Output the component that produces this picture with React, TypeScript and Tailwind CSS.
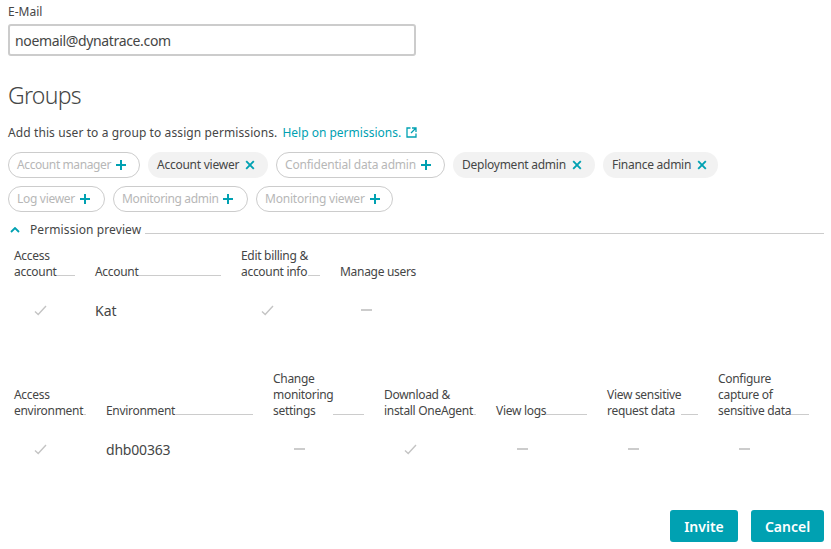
import React from 'react';

const font = { fontFamily: '"Noto Sans", sans-serif' };

const PlusIcon = () => (
  <svg width="12" height="12" viewBox="0 0 12 12" className="ml-[4px] shrink-0">
    <path d="M6 1v10M1 6h10" stroke="#00a1b2" strokeWidth="2" fill="none" />
  </svg>
);

const CloseIcon = () => (
  <svg width="10" height="10" viewBox="0 0 10 10" className="ml-[6px] shrink-0">
    <path d="M1.2 1.2l7.6 7.6M8.8 1.2l-7.6 7.6" stroke="#00a1b2" strokeWidth="1.9" fill="none" />
  </svg>
);

const Check = () => (
  <svg width="13" height="11" viewBox="0 0 13 11">
    <path d="M1 6.5l3.2 3L12 1" stroke="#c4c4c4" strokeWidth="1.4" fill="none" />
  </svg>
);

const Dash = () => <div className="w-[11px] h-[2px] bg-[#cccccc]" />;

const Chip = ({ label, active, width, track }: { label: string; active?: boolean; width: string; track?: string }) =>
  active ? (
    <div className={`${width} h-[26px] pl-[9px] rounded-full bg-[#f2f2f2] text-[#454646] flex items-center`}>
      <span className="tracking-[-0.25px]">{label}</span>
      <CloseIcon />
    </div>
  ) : (
    <div className={`${width} h-[26px] pl-[8px] rounded-full border border-[#cccccc] text-[#b7b7b7] flex items-center`}>
      <span className={track}>{label}</span>
      <PlusIcon />
    </div>
  );

const Header = ({ lines }: { lines: string[] }) => (
  <div className="flex items-end">
    <div className="whitespace-nowrap leading-[16px] tracking-[-0.3px]">
      {lines.map((l, i) => (
        <div key={i}>{l}</div>
      ))}
    </div>
    <div className="flex-1 border-b border-[#cccccc] mb-[4px]" />
  </div>
);

const PermTable = ({ cols, headers, cells }: { cols: string; headers: string[][]; cells: React.ReactNode[] }) => (
  <div className={`grid ${cols} gap-x-[20px] ml-[14px]`}>
    {headers.map((h, i) => (
      <Header key={i} lines={h} />
    ))}
    {cells.map((c, i) => (
      <div key={i} className="h-[60px] flex items-center">
        {c}
      </div>
    ))}
  </div>
);

const Mark = ({ children }: { children: React.ReactNode }) => (
  <div className="w-[52px] flex justify-center">{children}</div>
);

export default function App() {
  return (
    <div className="w-[831px] h-[549px] bg-white overflow-hidden text-[12px] text-[#454646] flex flex-col pt-[4px]" style={font}>
      <div className="pl-[8px] leading-[16px]">E-Mail</div>
      <div className="ml-[8px] mt-[4px] w-[408px] h-[32px] rounded-[3px] border-2 border-[#cccccc] flex items-center pl-[5px] text-[14px] tracking-[-0.35px] text-[#454646]">
        noemail@dynatrace.com
      </div>

      <h2 className="ml-[8px] mt-[22px] text-[23px] leading-[34px] font-light tracking-[-0.7px] text-[#454646]">Groups</h2>

      <div className="ml-[8px] mt-[12px] leading-[18px] flex items-center">
        <span className="tracking-[0.1px]">Add this user to a group to assign permissions.</span>
        <span className="ml-[5px] text-[#00a1b2]">Help on permissions.</span>
        <svg width="11" height="11" viewBox="0 0 11 11" className="ml-[5px] -mt-[2px]">
          <path d="M4.5 1H1v9h9V6.5" stroke="#00a1b2" strokeWidth="1.3" fill="none" />
          <path d="M6 1h4v4M10 1L5 6" stroke="#00a1b2" strokeWidth="1.3" fill="none" />
        </svg>
      </div>

      <div className="ml-[8px] mt-[10px] flex gap-x-[8px]">
        <Chip label="Account manager" width="w-[132px]" track="tracking-[-0.4px]" />
        <Chip label="Account viewer" active width="w-[120px]" />
        <Chip label="Confidential data admin" width="w-[169px]" track="tracking-[-0.2px]" />
        <Chip label="Deployment admin" active width="w-[142px]" />
        <Chip label="Finance admin" active width="w-[115px]" />
      </div>
      <div className="ml-[8px] mt-[8px] flex gap-x-[8px]">
        <Chip label="Log viewer" width="w-[97px]" track="tracking-[-0.3px]" />
        <Chip label="Monitoring admin" width="w-[135px]" track="tracking-[-0.35px]" />
        <Chip label="Monitoring viewer" width="w-[137px]" track="tracking-[-0.2px]" />
      </div>

      <div className="ml-[10px] mr-[7px] mt-[8px] flex items-end h-[18px]">
        <svg width="10" height="6" viewBox="0 0 10 6" className="mb-[5px]">
          <path d="M1 5l4-4 4 4" stroke="#00a1b2" strokeWidth="1.8" fill="none" />
        </svg>
        <span className="ml-[10px] leading-[16px] tracking-[0.1px] whitespace-nowrap">Permission preview</span>
        <div className="flex-1 ml-[4px] border-b border-[#cccccc] mb-[4px]" />
      </div>

      <div className="mt-[10px]">
        <PermTable
          cols="grid-cols-[61px_126px_79px_76px]"
          headers={[['Access', 'account'], ['Account'], ['Edit billing &', 'account info'], ['Manage users']]}
          cells={[
            <Mark><Check /></Mark>,
            <span className="text-[14px]">Kat</span>,
            <Mark><Check /></Mark>,
            <Mark><Dash /></Mark>,
          ]}
        />
      </div>

      <div className="mt-[31px]">
        <PermTable
          cols="grid-cols-[72px_147px_91px_92px_91px_91px_91px]"
          headers={[
            ['Access', 'environment'],
            ['Environment'],
            ['Change', 'monitoring', 'settings'],
            ['Download &', 'install OneAgent'],
            ['View logs'],
            ['View sensitive', 'request data'],
            ['Configure', 'capture of', 'sensitive data'],
          ]}
          cells={[
            <Mark><Check /></Mark>,
            <span className="text-[14px] tracking-[-0.2px]">dhb00363</span>,
            <Mark><Dash /></Mark>,
            <Mark><Check /></Mark>,
            <Mark><Dash /></Mark>,
            <Mark><Dash /></Mark>,
            <Mark><Dash /></Mark>,
          ]}
        />
      </div>

      <div className="mt-[31px] mr-[7px] flex justify-end gap-x-[13px] text-[14px] font-semibold text-white">
        <button className="w-[68px] h-[32px] rounded-[3px] bg-[#00a1b2]">Invite</button>
        <button className="w-[73px] h-[32px] rounded-[3px] bg-[#00a1b2]">Cancel</button>
      </div>
    </div>
  );
}
